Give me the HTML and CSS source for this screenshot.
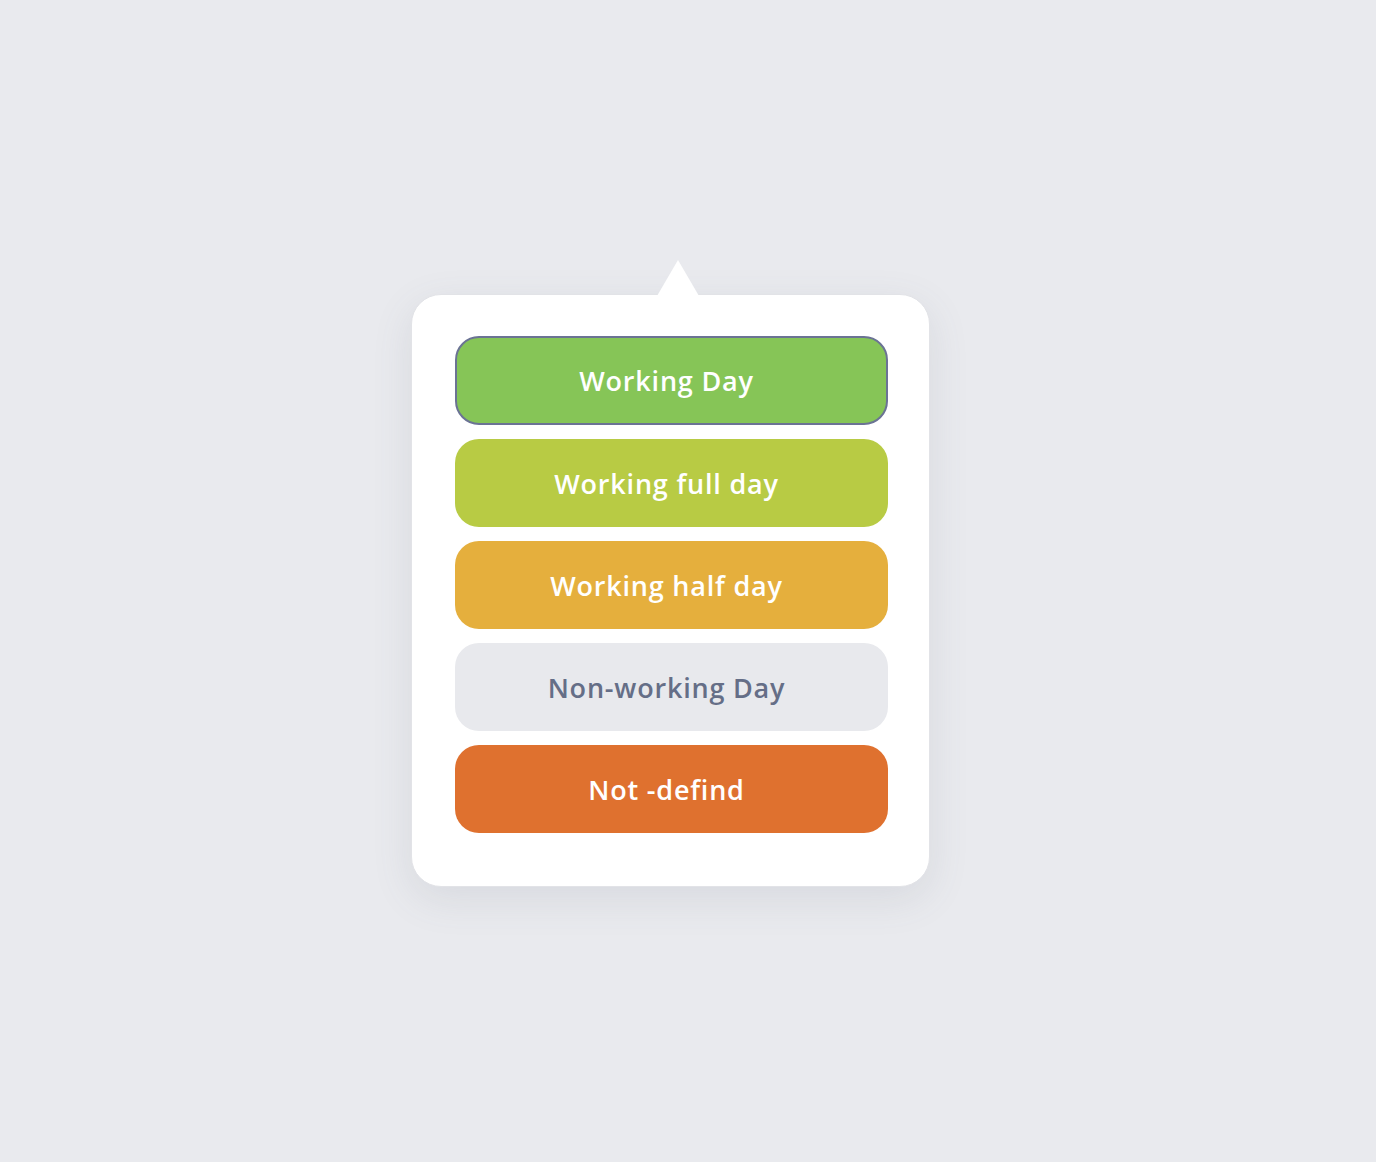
FILE: index.html
```html
<!DOCTYPE html>
<html>
<head>
    <meta charset="UTF-8">
    <meta name="viewport" content="width=device-width, initial-scale=1.0">
    <title>Day type</title>
    <link rel="stylesheet" href="styles.css">
</head>
<body>
    <div class="page">
        <div class="popover">
            <div class="popover-arrow"></div>
            <div class="day-list">
                <div class="day-option day-working selected">Working Day</div>
                <div class="day-option day-full">Working full day</div>
                <div class="day-option day-half">Working half day</div>
                <div class="day-option day-off">Non-working Day</div>
                <div class="day-option day-undefined">Not -defind</div>
            </div>
        </div>
    </div>
</body>
</html>
```

FILE: styles.css
```css
/* page */
body {
    margin: 0;
    padding: 0;
    background-color: #e9eaee;
    font-family: "Open Sans", Lato, sans-serif;
}

.page {
    display: flex;
    justify-content: flex-start;
    padding-top: 294px;
    padding-left: 411px;
    height: 868px;
}

.popover {
    position: relative;
    width: 519px;
    height: 593px;
    box-sizing: border-box;
    padding: 41px 41px 0 43px;
    background-color: #fff;
    border: 1px solid #e2e3e7;
    border-radius: 30px;
    box-shadow: 0px 12px 40px rgba(90, 95, 115, 0.12);
}

.popover-arrow {
    position: absolute;
    top: -35px;
    left: 245px;
    width: 0;
    height: 0;
    border-left: 21px solid transparent;
    border-right: 21px solid transparent;
    border-bottom: 36px solid #fff;
}

.day-list {
    display: flex;
    flex-direction: column;
    gap: 14px;
}

.day-option {
    height: 88px;
    box-sizing: border-box;
    display: flex;
    align-items: center;
    justify-content: center;
    border-radius: 24px;
    color: #fff;
    font-size: 27px;
    font-weight: 600;
    letter-spacing: 0.8px;
    padding-right: 10px;
}

.day-option.selected {
    height: 89px;
    border: 2px solid #6b7394;
}

.day-working {
    background-color: #86c557;
}

.day-full {
    background-color: #b8cb44;
}

.day-half {
    background-color: #e5af3d;
}

.day-off {
    background-color: #e8e9ed;
    color: #656e87;
}

.day-undefined {
    background-color: #df712f;
}
```
